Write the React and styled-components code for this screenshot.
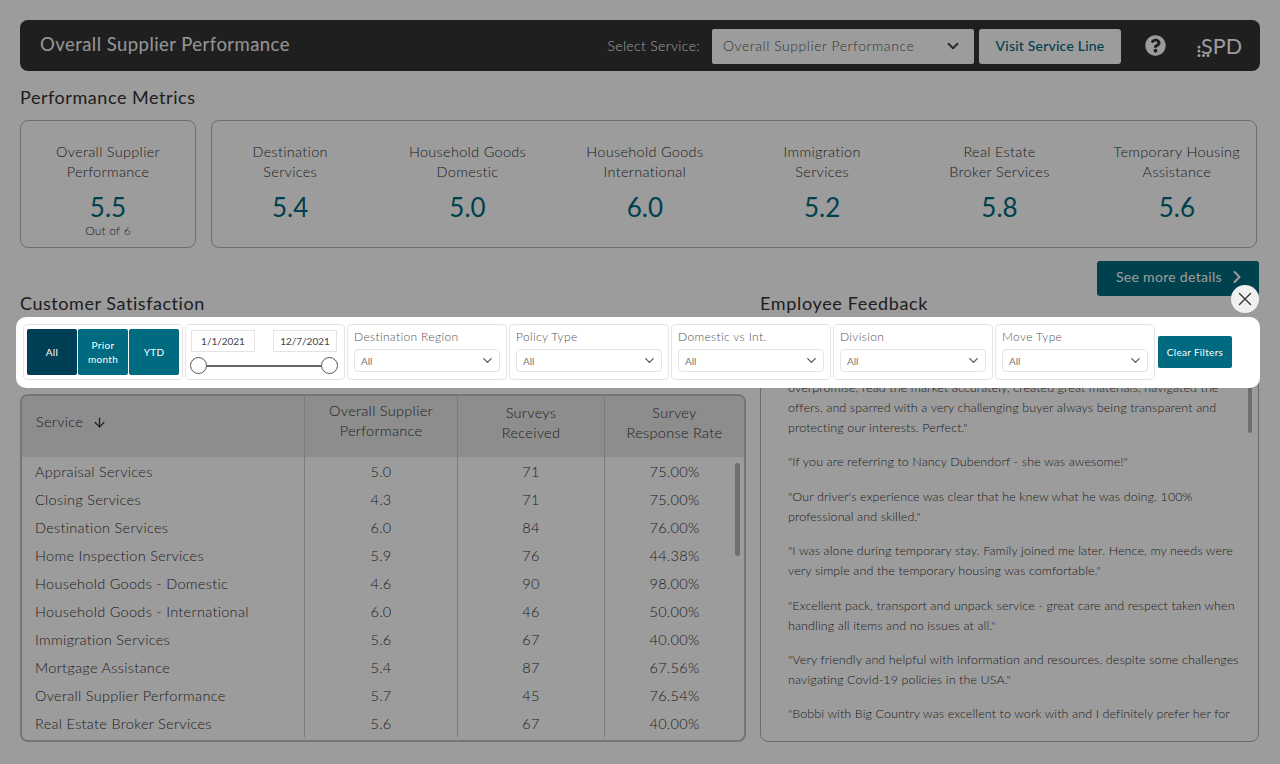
import React from 'react';
import styled, { createGlobalStyle } from 'styled-components';
import { ChevronDown, ChevronRight, ArrowDown, X } from 'lucide-react';
import { FaQuestionCircle } from 'react-icons/fa';

const teal = '#006a80';
const ink = '#3c3c3c';

const GlobalStyle = createGlobalStyle`
  html, body {
    margin: 0;
    height: 100%;
    overflow: hidden;
    background: #fff;
  }
  body {
    font-family: Lato, "Open Sans", sans-serif;
    color: ${ink};
  }
  * {
    box-sizing: border-box;
  }
`;

const Page = styled.div`
  width: 1280px;
  height: 764px;
  padding: 20px 20px 0;
`;

const Header = styled.header`
  display: flex;
  align-items: center;
  height: 51px;
  padding: 2px 18px 0 20px;
  background: #333;
  border-radius: 8px;
  color: #fff;
`;

const HeaderTitle = styled.h1`
  flex: 1;
  margin: 0 0 5px;
  font-size: 18.5px;
  font-weight: 400;
  letter-spacing: 0.45px;
  color: #f2f2f2;
`;

const SelectLabel = styled.span`
  margin: 0 12px 2px 0;
  font-size: 14px;
  font-weight: 300;
  letter-spacing: 0.35px;
  color: #fff;
`;

const ServiceSelect = styled.div`
  display: flex;
  align-items: center;
  justify-content: space-between;
  width: 262px;
  height: 35px;
  padding: 0 12px 2px 11px;
  background: #fff;
  border-radius: 2px;
  font-size: 14px;
  font-weight: 300;
  letter-spacing: 0.55px;
  color: #555;
`;

const VisitButton = styled.button`
  width: 142px;
  height: 35px;
  margin-left: 5px;
  padding: 0 0 2px;
  border: 0;
  border-radius: 3px;
  background: #fff;
  color: ${teal};
  font: 500 14px Lato, sans-serif;
  letter-spacing: 0.2px;
`;

const HelpIcon = styled(FaQuestionCircle)`
  margin: 0 0 3px 24px;
  font-size: 21px;
  color: #fff;
`;

const Logo = styled.div`
  position: relative;
  width: 46px;
  margin: 0 0 2px 30px;
  font-size: 21.5px;
  font-weight: 400;
  line-height: 24px;
  text-align: right;
  color: #fff;
`;

const LogoMark = styled.svg`
  position: absolute;
  left: 1px;
  top: 11px;
`;

const SectionTitle = styled.h2`
  margin: 0;
  font-size: 18px;
  font-weight: 400;
  line-height: 24px;
  letter-spacing: 0.55px;
  color: #333;
`;

const MetricsTitle = styled(SectionTitle)`
  margin: 14px 0 11px;
`;

const MetricsRow = styled.div`
  display: flex;
  gap: 15px;
  height: 128px;
`;

const MetricCard = styled.div`
  flex: ${(p) => (p.$wide ? '0 0 1046px' : '0 0 176px')};
  display: ${(p) => (p.$wide ? 'grid' : 'block')};
  grid-template-columns: repeat(6, 1fr);
  column-gap: 21px;
  padding: ${(p) => (p.$wide ? '0 1px 0 0' : '0 1px')};
  border: 1px solid #b4b4b4;
  border-radius: 8px;
  text-align: center;
`;

const Metric = styled.div`
  padding-top: 21px;
`;

const MetricLabel = styled.div`
  font-size: 14.5px;
  font-weight: 300;
  line-height: 20px;
  letter-spacing: 0.3px;
  color: #333;
  white-space: nowrap;
`;

const MetricValue = styled.div`
  margin-top: 9px;
  font-size: 26px;
  line-height: 32px;
  color: ${teal};
`;

const MetricNote = styled.div`
  margin-top: 1px;
  font-size: 12px;
  font-weight: 300;
  line-height: 14px;
  letter-spacing: 0.2px;
  color: #333;
`;

const DetailsRow = styled.div`
  display: flex;
  justify-content: flex-end;
  margin: 13px 1px 0 0;
`;

const DetailsButton = styled.button`
  display: flex;
  align-items: center;
  justify-content: space-between;
  width: 162px;
  height: 35px;
  padding: 0 12px 4px 19px;
  border: 0;
  border-radius: 3px;
  background: ${teal};
  color: #fff;
  font: 14px Lato, sans-serif;
  letter-spacing: 0.3px;
`;

const Columns = styled.div`
  display: grid;
  grid-template-columns: 726px 499px;
  column-gap: 14px;
  margin-top: -5px;
`;

const ColumnTitle = styled(SectionTitle)`
  margin-bottom: 9px;
  letter-spacing: 0.65px;
`;

const FeedbackColumn = styled.div`
  display: flex;
  flex-direction: column;
`;

const TableCard = styled.div`
  position: relative;
  height: 348px;
  margin-top: 79px;
  border: 2px solid #c0c0c0;
  border-radius: 8px;
  overflow: hidden;
`;

const HeadRow = styled.div`
  display: grid;
  grid-template-columns: 282px 153px 147px 140px;
  height: 61px;
  background: #e6e6e6;
`;

const HeadCell = styled.div`
  display: flex;
  align-items: center;
  justify-content: ${(p) => (p.$left ? 'flex-start' : 'center')};
  gap: 9px;
  padding: ${(p) => (p.$left ? '0 0 9px 14px' : `0 0 ${p.$raised ? 11 : 7}px`)};
  border-left: ${(p) => (p.$left ? '0' : '1px solid #c8c8c8')};
  font-size: 14.5px;
  font-weight: 300;
  line-height: 20px;
  letter-spacing: 0.3px;
  text-align: center;
  color: #333;
`;

const Row = styled.div`
  display: grid;
  grid-template-columns: 282px 153px 147px 140px;
  height: 28px;
  &:last-child {
    height: 33px;
    padding-bottom: 5px;
  }
`;

const Cell = styled.div`
  display: flex;
  align-items: center;
  justify-content: ${(p) => (p.$left ? 'flex-start' : 'center')};
  padding-left: ${(p) => (p.$left ? '13px' : '0')};
  border-left: ${(p) => (p.$left ? '0' : '1px solid #c8c8c8')};
  font-size: 14.5px;
  font-weight: 300;
  letter-spacing: 0.3px;
  color: #333;
`;

const TableThumb = styled.div`
  position: absolute;
  top: 67px;
  right: 4px;
  width: 5px;
  height: 93px;
  border-radius: 3px;
  background: #b4b4b4;
`;

const FeedbackCard = styled.div`
  position: relative;
  height: 418px;
  padding: 33px 0 0 27px;
  border: 1px solid #b0b0b0;
  border-radius: 8px;
  overflow: hidden;
`;

const Quote = styled.p`
  margin: 0 0 14.4px;
  font-size: 12.5px;
  font-weight: 300;
  line-height: 20px;
  letter-spacing: 0.1px;
  color: #333;
  white-space: nowrap;
`;

const FeedbackThumb = styled.div`
  position: absolute;
  top: 0;
  right: 6px;
  width: 4px;
  height: 108px;
  border-radius: 2px;
  background: #b4b4b4;
`;

const Scrim = styled.div`
  position: fixed;
  inset: 0;
  background: rgba(0, 0, 0, 0.39);
`;

const FilterBar = styled.div`
  position: fixed;
  left: 16px;
  top: 317px;
  display: flex;
  align-items: center;
  gap: 2px;
  width: 1244px;
  height: 71px;
  padding: 0 0 1px 7px;
  background: #fff;
  border-radius: 10px;
`;

const CloseButton = styled.button`
  position: fixed;
  left: 1231px;
  top: 285px;
  display: flex;
  align-items: center;
  justify-content: center;
  width: 28px;
  height: 28px;
  padding: 0;
  border: 0;
  border-radius: 50%;
  background: #f0f0f0;
  color: #333;
`;

const FilterGroup = styled.div`
  display: flex;
  flex-direction: column;
  width: 160px;
  height: 56px;
  padding: 5px 6px 0;
  border: 1px solid #e4e4e4;
  border-radius: 4px;
`;

const QuickGroup = styled(FilterGroup)`
  flex-direction: row;
  gap: 1px;
  padding: 4px 3px;
`;

const RangeGroup = styled(FilterGroup)`
  padding: 5px 7px 0 5px;
`;

const QuickButton = styled.button`
  flex: 1;
  padding: 0;
  border: 0;
  border-radius: 2px;
  background: ${(p) => (p.$active ? '#003f55' : teal)};
  color: #fff;
  font: 10px/14px Lato, sans-serif;
  letter-spacing: 0.3px;
`;

const DateRow = styled.div`
  display: flex;
  justify-content: space-between;
`;

const DateBox = styled.div`
  width: 64px;
  height: 22px;
  border: 1px solid #e4e4e4;
  font-size: 10px;
  line-height: 20px;
  text-align: center;
  color: #444;
`;

const Slider = styled.div`
  position: relative;
  height: 2px;
  margin: 13px 7px 0 7px;
  background: #666;
`;

const Knob = styled.span`
  position: absolute;
  top: -8px;
  ${(p) => (p.$end ? 'right: -8px' : 'left: -8px')};
  width: 17px;
  height: 17px;
  border: 1px solid #555;
  border-radius: 50%;
  background: #fff;
`;

const FilterLabel = styled.div`
  font-size: 12px;
  font-weight: 300;
  line-height: 14px;
  letter-spacing: 0.35px;
  color: #555;
  white-space: nowrap;
`;

const FilterSelect = styled.div`
  display: flex;
  align-items: center;
  justify-content: space-between;
  height: 23px;
  margin-top: 5px;
  padding: 0 4px 0 6px;
  border: 1px solid #e4e4e4;
  border-radius: 4px;
  font-size: 10px;
  color: #777;
`;

const ClearButton = styled.button`
  width: 74px;
  height: 32px;
  margin-left: 1px;
  padding: 0;
  border: 0;
  border-radius: 2px;
  background: ${teal};
  color: #fff;
  font: 10px Lato, sans-serif;
  letter-spacing: 0.3px;
`;

const metrics = [
  ['Destination', 'Services', '5.4'],
  ['Household Goods', 'Domestic', '5.0'],
  ['Household Goods', 'International', '6.0'],
  ['Immigration', 'Services', '5.2'],
  ['Real Estate', 'Broker Services', '5.8'],
  ['Temporary Housing', 'Assistance', '5.6'],
];

const rows = [
  ['Appraisal Services', '5.0', '71', '75.00%'],
  ['Closing Services', '4.3', '71', '75.00%'],
  ['Destination Services', '6.0', '84', '76.00%'],
  ['Home Inspection Services', '5.9', '76', '44.38%'],
  ['Household Goods - Domestic', '4.6', '90', '98.00%'],
  ['Household Goods - International', '6.0', '46', '50.00%'],
  ['Immigration Services', '5.6', '67', '40.00%'],
  ['Mortgage Assistance', '5.4', '87', '67.56%'],
  ['Overall Supplier Performance', '5.7', '45', '76.54%'],
  ['Real Estate Broker Services', '5.6', '67', '40.00%'],
];

const quotes = [
  [
    'They did a wonderful job representing us from start to finish and did not',
    'overpromise, read the market accurately, created great materials, navigated the',
    'offers, and sparred with a very challenging buyer always being transparent and',
    'protecting our interests.  Perfect."',
  ],
  ['"If you are referring to Nancy Dubendorf - she was awesome!"'],
  [
    '"Our driver\'s experience was clear that he knew what he was doing.  100%',
    'professional and skilled."',
  ],
  [
    '"I was alone during temporary stay. Family joined me later. Hence, my needs were',
    'very simple and the temporary housing was comfortable."',
  ],
  [
    '"Excellent pack, transport and unpack service - great care and respect taken when',
    'handling all items and no issues at all."',
  ],
  [
    '"Very friendly and helpful with information and resources, despite some challenges',
    'navigating Covid-19 policies in the USA."',
  ],
  ['"Bobbi with Big Country was excellent to work with and I definitely prefer her for'],
];

const filters = ['Destination Region', 'Policy Type', 'Domestic vs Int.', 'Division', 'Move Type'];

const LogoDots = () => (
  <LogoMark width="14" height="13" viewBox="0 0 14 13" fill="#fff">
    <circle cx="2" cy="2" r="1.5" />
    <circle cx="2" cy="6" r="1.5" />
    <circle cx="2" cy="10.5" r="1.5" />
    <circle cx="6.5" cy="10.5" r="1.5" />
    <circle cx="11" cy="10.5" r="1.5" />
  </LogoMark>
);

export default function App() {
  return (
    <>
      <GlobalStyle />
      <Page>
        <Header>
          <HeaderTitle>Overall Supplier Performance</HeaderTitle>
          <SelectLabel>Select Service:</SelectLabel>
          <ServiceSelect>
            Overall Supplier Performance
            <ChevronDown size={18} strokeWidth={2.5} color="#444" />
          </ServiceSelect>
          <VisitButton>Visit Service Line</VisitButton>
          <HelpIcon />
          <Logo>
            <LogoDots />
            SPD
          </Logo>
        </Header>

        <MetricsTitle>Performance Metrics</MetricsTitle>
        <MetricsRow>
          <MetricCard>
            <Metric>
              <MetricLabel>Overall Supplier</MetricLabel>
              <MetricLabel>Performance</MetricLabel>
              <MetricValue>5.5</MetricValue>
              <MetricNote>Out of 6</MetricNote>
            </Metric>
          </MetricCard>
          <MetricCard $wide>
            {metrics.map(([a, b, value]) => (
              <Metric key={a + b}>
                <MetricLabel>{a}</MetricLabel>
                <MetricLabel>{b}</MetricLabel>
                <MetricValue>{value}</MetricValue>
              </Metric>
            ))}
          </MetricCard>
        </MetricsRow>

        <DetailsRow>
          <DetailsButton>
            See more details
            <ChevronRight size={20} strokeWidth={2.5} />
          </DetailsButton>
        </DetailsRow>

        <Columns>
          <div>
            <SectionTitle>Customer Satisfaction</SectionTitle>
            <TableCard>
              <TableThumb />
              <HeadRow>
                <HeadCell $left>
                  Service <ArrowDown size={15} />
                </HeadCell>
                <HeadCell $raised>
                  Overall Supplier
                  <br />
                  Performance
                </HeadCell>
                <HeadCell>
                  Surveys
                  <br />
                  Received
                </HeadCell>
                <HeadCell>
                  Survey
                  <br />
                  Response Rate
                </HeadCell>
              </HeadRow>
              {rows.map(([name, score, count, rate]) => (
                <Row key={name}>
                  <Cell $left>{name}</Cell>
                  <Cell>{score}</Cell>
                  <Cell>{count}</Cell>
                  <Cell>{rate}</Cell>
                </Row>
              ))}
            </TableCard>
          </div>
          <FeedbackColumn>
            <ColumnTitle>Employee Feedback</ColumnTitle>
            <FeedbackCard>
              <FeedbackThumb />
              {quotes.map((lines) => (
                <Quote key={lines[0]}>
                  {lines.map((line) => (
                    <React.Fragment key={line}>
                      {line}
                      <br />
                    </React.Fragment>
                  ))}
                </Quote>
              ))}
            </FeedbackCard>
          </FeedbackColumn>
        </Columns>
      </Page>

      <Scrim />
      <CloseButton aria-label="Close">
        <X size={22} strokeWidth={1.5} />
      </CloseButton>
      <FilterBar>
        <QuickGroup>
          <QuickButton $active>All</QuickButton>
          <QuickButton>
            Prior
            <br />
            month
          </QuickButton>
          <QuickButton>YTD</QuickButton>
        </QuickGroup>
        <RangeGroup>
          <DateRow>
            <DateBox>1/1/2021</DateBox>
            <DateBox>12/7/2021</DateBox>
          </DateRow>
          <Slider>
            <Knob />
            <Knob $end />
          </Slider>
        </RangeGroup>
        {filters.map((name) => (
          <FilterGroup key={name}>
            <FilterLabel>{name}</FilterLabel>
            <FilterSelect>
              All
              <ChevronDown size={15} color="#555" />
            </FilterSelect>
          </FilterGroup>
        ))}
        <ClearButton>Clear Filters</ClearButton>
      </FilterBar>
    </>
  );
}
